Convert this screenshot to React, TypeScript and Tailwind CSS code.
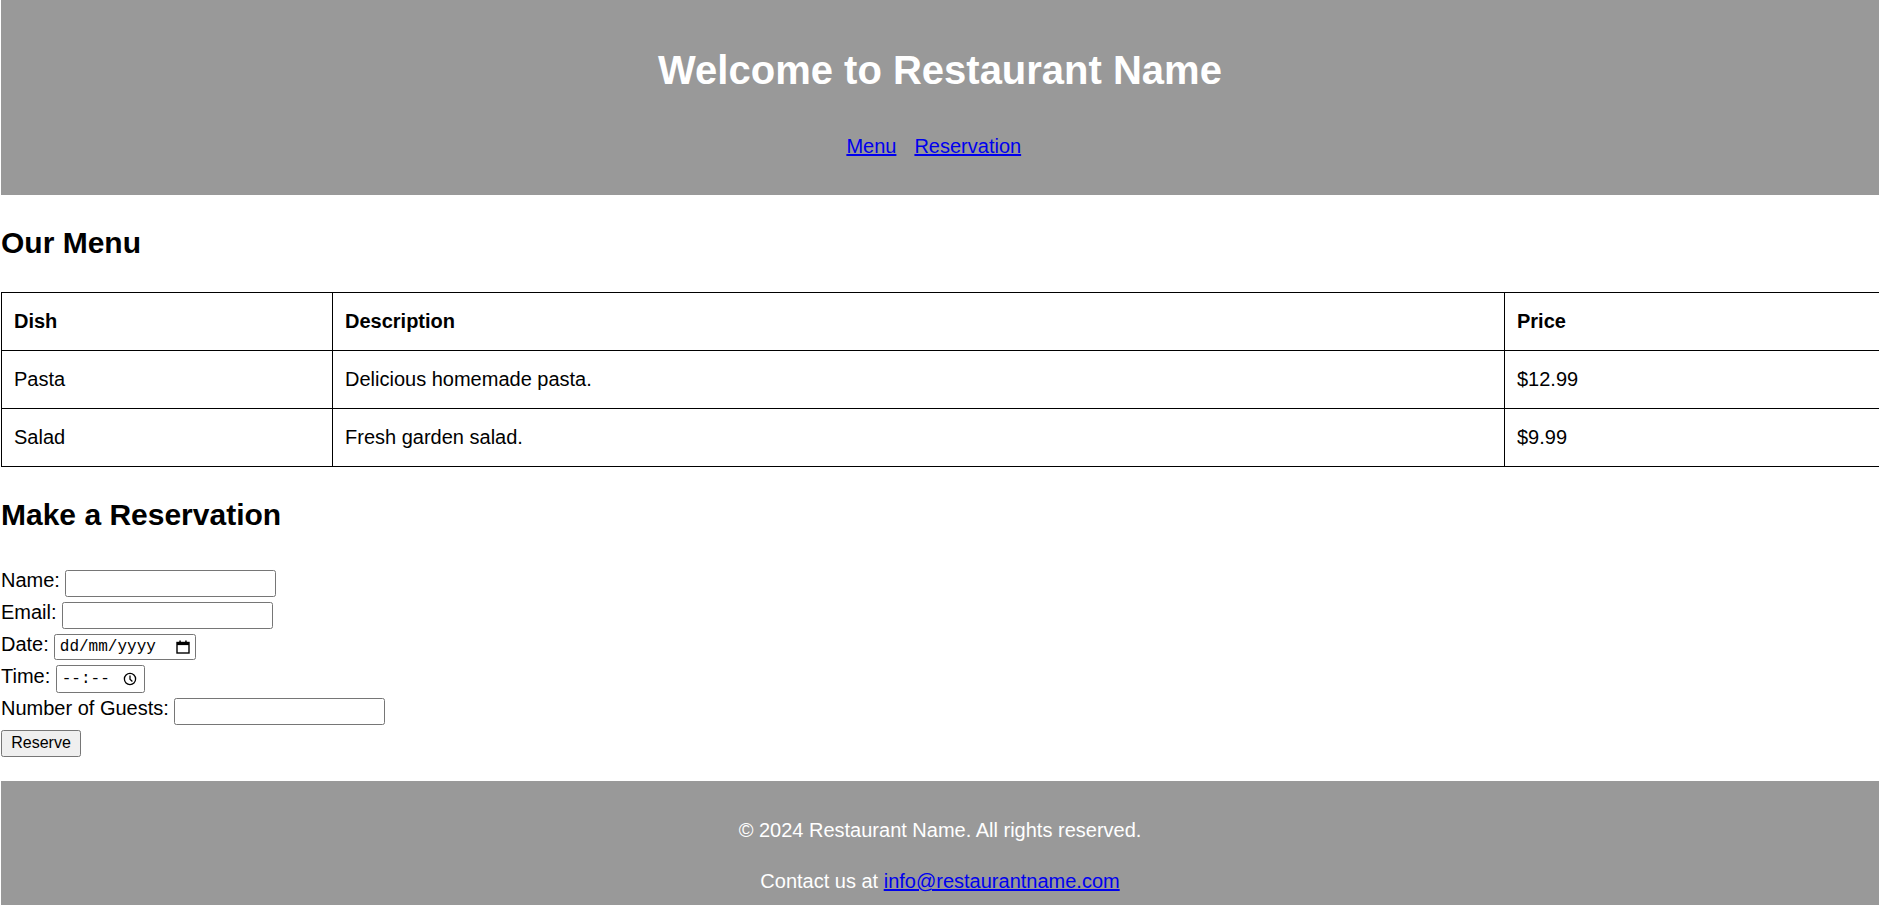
import React from 'react';

const dishes = [
  { name: 'Pasta', description: 'Delicious homemade pasta.', price: '$12.99' },
  { name: 'Salad', description: 'Fresh garden salad.', price: '$9.99' },
];

const CalendarIcon = () => (
  <svg width="14" height="14" viewBox="0 0 14 14" fill="none">
    <rect x="1" y="2.5" width="12" height="10.5" stroke="#000" strokeWidth="1.4" />
    <rect x="1" y="2.5" width="12" height="2.6" fill="#000" />
    <rect x="3.3" y="0.5" width="1.5" height="2.5" fill="#000" />
    <rect x="9.2" y="0.5" width="1.5" height="2.5" fill="#000" />
  </svg>
);

const ClockIcon = () => (
  <svg width="14" height="14" viewBox="0 0 14 14" fill="none">
    <circle cx="7" cy="7" r="5.6" stroke="#000" strokeWidth="1.3" />
    <path d="M7 3.6V7.2L9.4 9.4" stroke="#000" strokeWidth="1.3" />
  </svg>
);

const inputBox = 'h-[27px] border border-[#767676] rounded-[2.4px] bg-white';
const cell = 'border border-black text-left pl-[12px] pt-[17.5px] pb-[16.5px]';

const App: React.FC = () => {
  return (
    <div className="min-h-screen bg-white pl-[1px] text-black font-['Liberation_Sans',Arial,sans-serif] overflow-hidden">
      {/* header */}
      <header className="bg-[#999999] text-white text-center pt-[47px] pb-[37.5px]">
        <h1 className="text-[40px] leading-[46px] font-bold">Welcome to Restaurant Name</h1>
        <nav className="mt-[41.5px] flex justify-center text-[20px] leading-[23px]">
          <a href="#menu" className="mr-[18px] text-[#0000ee] underline">Menu</a>
          <a href="#reservation" className="mr-[12.5px] text-[#0000ee] underline">Reservation</a>
        </nav>
      </header>

      {/* menu */}
      <section id="menu">
        <h2 className="mt-[30.7px] text-[30px] leading-[34.5px] font-bold">Our Menu</h2>
        <div className="mt-[31.8px] overflow-hidden">
          <table className="w-[1920px] table-fixed border-collapse text-[20px] leading-[23px]">
            <colgroup>
              <col className="w-[331px]" />
              <col className="w-[1172px]" />
              <col />
            </colgroup>
            <thead>
              <tr>
                <th className={`${cell} font-bold`}>Dish</th>
                <th className={`${cell} font-bold`}>Description</th>
                <th className={`${cell} font-bold`}>Price</th>
              </tr>
            </thead>
            <tbody>
              {dishes.map((d) => (
                <tr key={d.name}>
                  <td className={cell}>{d.name}</td>
                  <td className={cell}>{d.description}</td>
                  <td className={cell}>{d.price}</td>
                </tr>
              ))}
            </tbody>
          </table>
        </div>
      </section>

      {/* reservation */}
      <section id="reservation">
        <h2 className="mt-[31.3px] text-[30px] leading-[34.5px] font-bold">Make a Reservation</h2>
        <form className="mt-[34.7px] text-[20px] leading-[23px]" onSubmit={(e) => e.preventDefault()}>
          <div className="h-[32px] flex items-center gap-[5.5px]">
            <label className="pb-[5px]">Name:</label>
            <input type="text" className={`${inputBox} w-[211px]`} />
          </div>
          <div className="h-[32px] flex items-center gap-[5.5px]">
            <label className="pb-[5px]">Email:</label>
            <input type="email" className={`${inputBox} w-[211px]`} />
          </div>
          <div className="h-[32px] flex items-center gap-[5.5px]">
            <label className="pb-[5px]">Date:</label>
            <div className="h-[26px] w-[142px] border border-[#767676] rounded-[2.4px] bg-white flex items-center justify-between pl-[4.5px] pr-[5px] font-['Liberation_Mono',monospace] text-[16px]">
              <span>dd/mm/yyyy</span>
              <CalendarIcon />
            </div>
          </div>
          <div className="h-[32px] flex items-center gap-[5.5px]">
            <label className="pb-[5px]">Time:</label>
            <div className="h-[28px] w-[89px] border border-[#767676] rounded-[2.4px] bg-white flex items-center justify-between pl-[5px] pr-[6.5px] font-['Liberation_Mono',monospace] text-[16px]">
              <span>--:--</span>
              <ClockIcon />
            </div>
          </div>
          <div className="h-[32px] flex items-center gap-[5.5px]">
            <label className="pb-[5px]">Number of Guests:</label>
            <input type="text" className={`${inputBox} w-[211px]`} />
          </div>
          <div className="h-[32px] flex items-center">
            <button type="submit" className="h-[27px] w-[80px] bg-[#efefef] border border-[#767676] rounded-[2.4px] text-[16px] leading-[18px]">
              Reserve
            </button>
          </div>
        </form>
      </section>

      {/* footer */}
      <footer className="mt-[21.5px] bg-[#999999] text-white text-center text-[20px] leading-[23px] pt-[38.5px] pb-[40px]">
        <p>© 2024 Restaurant Name. All rights reserved.</p>
        <p className="mt-[28px]">
          Contact us at <a href="mailto:info@restaurantname.com" className="text-[#0000ee] underline">info@restaurantname.com</a>
        </p>
      </footer>
    </div>
  );
};

export default App;
